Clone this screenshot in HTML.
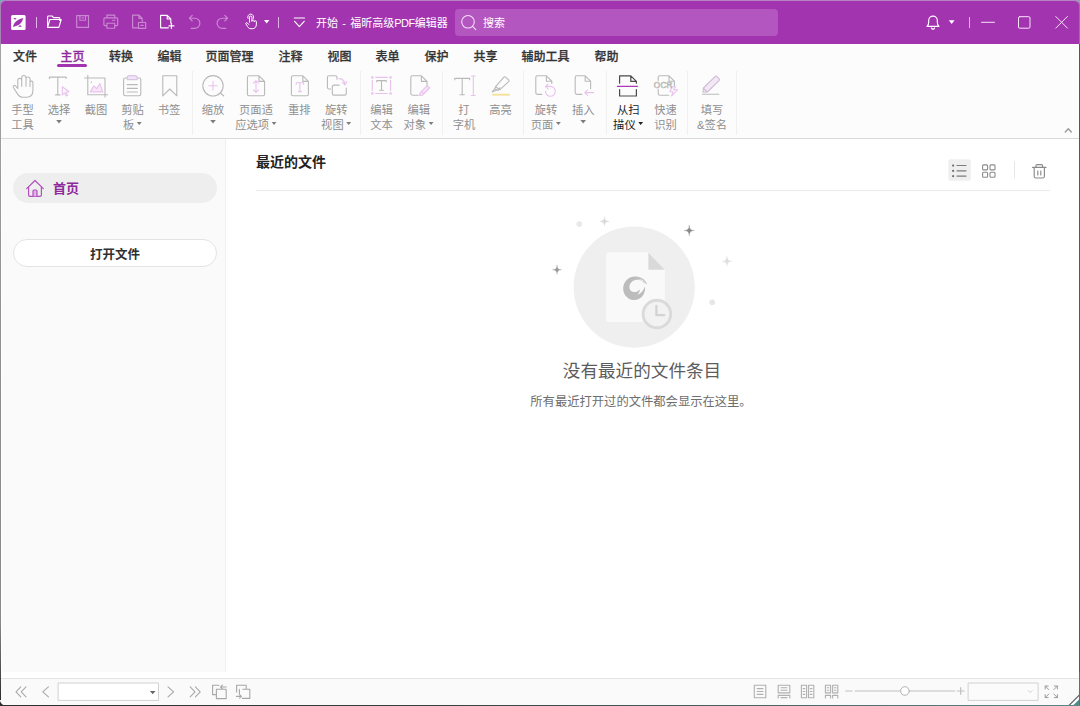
<!DOCTYPE html>
<html lang="zh-CN">
<head>
<meta charset="utf-8">
<title>开始 - 福昕高级PDF编辑器</title>
<style>
*{box-sizing:border-box;margin:0;padding:0}
html,body{width:1080px;height:706px;overflow:hidden;background:#5f8f93}
body{background:linear-gradient(180deg,#7fa9b8 0,#7fa9b8 50%,#2e2e2e 50%,#2e2e2e 100%)}
body{font-family:"Liberation Sans","Noto Sans CJK SC",sans-serif;position:relative;color:#333}
.abs{position:absolute}
#win{position:absolute;left:0;top:0;width:1080px;height:706px;background:#fff;border-radius:6px 6px 0 7px;overflow:hidden}
#title{position:absolute;left:0;top:0;width:1080px;height:44px;background:#a334b0}
#title svg{position:absolute;overflow:visible}
#title .sep{position:absolute;width:1px;background:#e2b4e7;top:17px;height:11px}
#ttext{position:absolute;left:316px;top:14.300px;font-size:11px;line-height:18px;color:#fff;white-space:nowrap;word-spacing:1.200px}
#search{position:absolute;left:455px;top:9px;width:323px;height:27px;border-radius:4px;background:#b456c0}
#search span{position:absolute;left:28px;top:5px;font-size:11px;line-height:18px;color:#fff}
#menu{position:absolute;left:0;top:44px;width:1080px;height:26px;background:#fcfcfd}
#menu span{-webkit-text-stroke:.25px currentColor;position:absolute;top:4.400px;margin-left:.4px;font-size:12px;line-height:18px;font-weight:500;color:#333;white-space:nowrap;transform:translateX(-50%)}
#menu span.on{color:#8e2a9b}
#menu i{position:absolute;left:57px;top:20px;width:30px;height:3px;border-radius:2px;background:#a334b0}
#ribbon{position:absolute;left:0;top:70px;width:1080px;height:68px;background:#fcfcfd}
.rb{position:absolute;top:0;width:40px;height:68px;transform:translateX(-50%);text-align:center;font-size:11.3px;line-height:15.7px;color:#8f8f8f;white-space:nowrap}
.rb svg{position:absolute;left:50%;top:4px;width:26px;height:26px;margin-left:-13px;overflow:visible}
.rb .t{position:absolute;left:-10px;right:-10px;top:32.6px}
.rb.en{color:#222}
.car{display:inline-block;width:5.6px;height:3.5px;background:#7c7c7c;clip-path:polygon(0 0,100% 0,50% 100%);vertical-align:4.3px;margin-left:2.2px}.car.lone{margin-left:0;vertical-align:5.8px}
.en .car{background:#222}
.gsep{position:absolute;top:1px;width:1px;height:64px;background:#f0f0f0}
#rline{position:absolute;left:0;top:138px;width:1080px;height:1px;background:#d9d9d9}
#side{position:absolute;left:2px;top:139px;width:224px;height:533px;background:#fafafa;border-right:1px solid #f0f0f0}
#home{position:absolute;left:13px;top:173.300px;width:204px;height:29.800px;border-radius:15px;background:#eeeeee}
#home span{position:absolute;left:40px;top:5.500px;font-size:13px;line-height:19px;font-weight:700;color:#8e2a9b}
#open{position:absolute;left:13px;top:239px;width:204px;height:28px;border-radius:14px;background:#fff;border:1px solid #e3e3e3;text-align:center;font-size:12.500px;line-height:26px;font-weight:700;color:#303030;padding-top:1.800px;padding-left:0}
#h1{position:absolute;left:256px;top:151.500px;font-size:14px;line-height:20px;font-weight:700;color:#222}
#hline{position:absolute;left:256px;top:190px;width:794px;height:1px;background:#ebebeb}
#e1{position:absolute;left:442px;width:400px;top:358.300px;text-align:center;font-size:17.600px;line-height:26px;color:#5c5c5c}
#e2{position:absolute;left:441px;width:400px;top:392.800px;text-align:center;font-size:12.300px;line-height:18px;color:#6e6e6e}
#status{position:absolute;left:0;top:678px;width:1080px;height:28px;background:#fafafa;border-top:1px solid #e4e4e4}
#frame{position:absolute;left:0;top:0;width:1080px;height:706px;pointer-events:none}
#frame i{position:absolute;display:block}
#tedge{position:absolute;left:0;top:0;width:1080px;height:44px;border-radius:6px 6px 0 0;border-top:1px solid #b684c2;border-left:1px solid #a583b3;border-right:1px solid #9a6fa8;pointer-events:none}
</style>
</head>
<body>
<div id="win">
<div id="title">
<div class="sep" style="left:36px"></div>
<div class="sep" style="left:278px"></div>
<div class="sep" style="left:969px"></div>
<div id="ttext">开始 - 福昕高级<span style="letter-spacing:-.5px">PDF</span>编辑器</div>
<div id="search"><span>搜索</span></div>
<svg id="tsvg" width="1080" height="44" viewBox="0 0 1080 44" style="left:0;top:0" fill="none" stroke="#fff" stroke-width="1.15" stroke-linecap="round" stroke-linejoin="round">
<!-- logo -->
<rect x="11.1" y="15" width="14.5" height="15" rx="1.5" fill="#fff" stroke="none"/>
<path d="M13 27 C13.6 22.600 17.400 19 23.500 18 C22.400 19.800 22.600 21.200 21 23 C19 25.300 16 26.200 13 27 Z M13.200 17.900 L16.800 18.200 L15 19.800 Z M21.800 26.900 L18 26.500 L20.200 25 Z" fill="#a334b0" stroke="none"/>
<!-- open folder -->
<path d="M47.6 27.4 V16.9 q0-.9 .9-.9 h3.6 l1.5 1.6 h5.3 q.9 0 .9 .9 v1.9 M47.6 27.4 l2.3-7.9 h11.3 l-2.3 7.9 Z"/>
<g opacity=".42">
<!-- save -->
<path d="M76.7 15.6 h11.8 v11.8 h-11.8 Z M79.9 15.6 v4.6 h5.6 v-4.6 M82.2 17.9 h1.2"/>
<!-- printer -->
<path d="M106.9 17.8 v-2.7 h7.8 v2.7 M106.9 25.6 h-2 q-1 0-1-1 v-5.8 q0-1 1-1 h11.8 q1 0 1 1 v5.8 q0 1-1 1 h-2 M106.9 23.2 h7.8 v5 h-7.8 Z M112.6 20.2 h2.4"/>
<!-- page with box -->
<path d="M138.2 27.8 h-5.6 v-12.6 h6.4 l3.2 3.2 v3.8 M139 15.2 v3.2 h3.2 M138.5 22.5 h7.2 v5.8 h-7.2 Z M141 25.4 h2.2"/>
<!-- undo -->
<path d="M189.4 18.2 h5.4 a5.1 5.1 0 0 1 0 10.2 h-3.6 M192.2 15.4 l-2.8 2.8 l2.8 2.8"/>
<!-- redo -->
<path d="M227.6 18.2 h-5.4 a5.1 5.1 0 0 0 0 10.2 h3.6 M224.8 15.4 l2.8 2.8 l-2.8 2.8"/>
</g>
<!-- new page -->
<path d="M168.4 27.8 h-7.8 v-12.4 h6.6 l3.6 3.6 v4 M167.2 15.4 v3.6 h3.6 M171.4 23.4 v5 M168.9 25.9 h5"/>
<!-- hand pointer -->
<path stroke-width="1" d="M249.500 22.2 v-5 a1.200 1.200 0 0 1 2.400 0 v3.800 M251.900 21 a1.150 1.150 0 0 1 2.300 .3 M254.200 21.600 a1.100 1.100 0 0 1 2.200 .5 v2 c0 3-1.600 4.600-4 4.600 h-1.400 c-1.600 0-2.600-.7-3.500-2.200 l-1.600-2.600 c-.5-.9 .7-1.700 1.400-1 l1.500 1.600 M248 18.400 a3 3 0 1 1 5.400 0"/>
<path d="M264 20 h5.400 l-2.700 3.500 Z" fill="#fff" stroke="none"/>
<!-- customize arrow -->
<path d="M294.300 18 h10.200 M294.600 21.300 l4.800 5.300 l4.800-5.300"/>
<!-- search icon -->
<g stroke-width="1.050" stroke="#f6e4f8"><circle cx="468" cy="21.800" r="6.300"/><path d="M472.600 26.400 l3.200 3.200"/></g>
<!-- bell -->
<path d="M927 26.400 c1.300-1 1.700-2.200 1.700-4.200 v-1.800 a4.300 4.300 0 0 1 8.600 0 v1.800 c0 2 .4 3.200 1.700 4.200 Z M931.400 28 a1.700 1.700 0 0 0 3.200 0"/>
<path d="M948.800 20.300 h5.800 l-2.900 3.600 Z" fill="#fff" stroke="none"/>
<!-- window buttons -->
<g stroke-width="1" stroke="#f6e4f8"><path d="M981.500 22.300 h13"/>
<rect x="1018.500" y="16.700" width="11.500" height="11.500" rx="1.200"/>
<path d="M1055.800 16.500 l11.600 11.600 M1067.400 16.500 l-11.600 11.600"/></g>
</svg>
</div>
<div id="menu">
<span style="left:24.5px">文件</span><span class="on" style="left:72px">主页</span><span style="left:120.5px">转换</span><span style="left:169px">编辑</span><span style="left:229px">页面管理</span><span style="left:290px">注释</span><span style="left:339px">视图</span><span style="left:387px">表单</span><span style="left:436px">保护</span><span style="left:485px">共享</span><span style="left:545px">辅助工具</span><span style="left:606px">帮助</span>
<i></i>
</div>
<div id="ribbon">
<svg id="rsvg" width="1080" height="68" viewBox="0 70 1080 68" style="position:absolute;left:0;top:0" fill="none" stroke="#b9b9b9" stroke-width="1.1" stroke-linecap="round" stroke-linejoin="round">
<!-- hand -->
<path d="M17.800 88.500 v-8.200 a1.950 1.950 0 0 1 3.900 0 v6 M21.700 86.300 v-8.600 a2.150 2.150 0 0 1 4.300 0 v8.600 M26 86.300 v-7.300 a2 2 0 0 1 4 0 v7.600 M30 86.600 v-4 a1.450 1.450 0 0 1 2.900 0 v7.600 c0 4.400-2.600 7-6.200 7 h-3.800 c-2.600 0-4.200-1.300-5.600-3.600 l-3.900-6.100 c-.9-1.500 .9-2.800 2.100-1.700 l2.300 2.700"/>
<!-- select T -->
<path d="M49.400 78.400 v-1.300 h16.800 v1.300 M57.800 77.100 v17.800 M55.600 94.900 h4.400"/>
<path d="M62.300 86.800 l6.700 4.900 l-3.100 .5 l1.700 3 l-1.300 .7 l-1.700-3 l-2.300 2 Z" stroke="#e8c1ec"/>
<!-- snapshot -->
<path d="M87.800 75.400 v19.300 h19.800 M84.600 78 h20.400 v18.900"/>
<path d="M90.200 91.900 l3.700-6 l2.800 2.700 l3.300-5 l2.800 8.300 Z" stroke="#e8c1ec" fill="#f6e6f8"/>
<circle cx="91.400" cy="82.300" r=".7" fill="#d9a0df" stroke="none"/>
<!-- clipboard -->
<path d="M127.300 78 h-2 q-1.700 0-1.700 1.700 v14.400 q0 1.700 1.700 1.700 h13.800 q1.700 0 1.700-1.700 v-14.400 q0-1.700-1.700-1.700 h-2"/>
<path d="M127.200 79.600 v-1.600 q0-2.400 2.400-2.400 h5.200 q2.400 0 2.400 2.400 v1.600 Z" stroke="#dcc4e4" fill="#f1e4f5"/>
<path d="M127.200 84.600 h10.200 M127.200 88.400 h10.200 M127.200 92 h10.200"/>
<!-- bookmark -->
<path d="M162.800 95.800 v-20 h14 v20 l-7-6.800 Z"/>
<!-- zoom -->
<circle cx="213" cy="85.800" r="10.200"/><path d="M220.400 93 l3.400 3"/>
<path d="M208.800 85.800 h8.400 M213 81.600 v8.400" stroke="#e8c1ec"/>
<!-- page fit -->
<path d="M247.400 77.400 q0-1.600 1.600-1.600 h10 l5.600 5.600 v12.800 q0 1.600-1.600 1.600 h-14 q-1.600 0-1.600-1.600 Z M259 75.800 v5.600 h5.600"/>
<path d="M256 80.800 v11.400 M253.400 83.200 l2.600-2.600 l2.600 2.600 M253.400 89.800 l2.600 2.600 l2.600-2.600" stroke="#e8c1ec"/>
<!-- reflow -->
<path d="M291.400 77.400 q0-1.600 1.600-1.600 h9.800 l5.600 5.600 v12.800 q0 1.600-1.600 1.600 h-13.800 q-1.600 0-1.600-1.600 Z M302.800 75.800 v5.600 h5.600"/>
<path d="M296.200 84.200 v-1.400 h7.400 v1.400 M299.900 82.800 v8.800 M298.400 91.600 h3" stroke="#e8c1ec"/>
<!-- rotate view -->
<path d="M330.600 89 h-1.600 q-1.600 0-1.600-1.600 v-10 q0-1.600 1.600-1.600 h6.400 q1.600 0 1.600 1.600 v1.800"/>
<path d="M346.300 88 v5.400 q0 1.700-1.700 1.700 h-10.600 q-1.700 0-1.700-1.700 v-6.600 q0-1.700 1.700-1.700 h5.200"/>
<path d="M339 78.600 c3.200 0 5.400 2 5.800 5.400 M342.200 82.200 l2.700 2.600 l1.900-3.200" stroke="#e8c1ec"/>
<!-- edit text -->
<path d="M375.600 77.400 h11.800 M375.600 93.500 h11.800 M372.300 80.400 v10 M390.600 80.400 v10" stroke="#e8c1ec"/>
<g fill="#e8c1ec" stroke="none"><rect x="371.200" y="76.300" width="2.300" height="2.300"/><rect x="389.400" y="76.300" width="2.300" height="2.300"/><rect x="371.200" y="92.300" width="2.300" height="2.300"/><rect x="389.400" y="92.300" width="2.300" height="2.300"/></g>
<path d="M376.800 81.800 v-1.200 h9.400 v1.200 M381.500 80.600 v9.600 M379.600 90.200 h3.800"/>
<!-- edit object -->
<path d="M418.200 95.200 h-5.800 q-1.600 0-1.600-1.600 v-16.200 q0-1.600 1.600-1.600 h9 l5.600 5.600 v4 M421.400 75.800 v5.600 h5.600"/>
<path d="M420.200 92.600 l7-7 l2.400 2.400 l-7 7 l-3 .6 Z M421.400 91.400 l2.400 2.400" stroke="#e8c1ec" fill="#f6e6f8"/>
<!-- typewriter -->
<path d="M454.800 79.800 v-1.400 h14.800 v1.400 M462.200 78.400 v16.400 M460 94.800 h4.400"/>
<path d="M471.400 76 h3.800 M471.400 95.500 h3.800 M473.300 76 v19.500" stroke="#e8c1ec"/>
<!-- highlight -->
<path d="M503.700 77.300 q.9-1 1.900-.1 l3 2.700 q.9 .9 0 1.800 l-8.700 8 l-4.300-3 Z M495.600 86.700 l-1 2.100 l-2.400 3.100 l3.600-1.500 l2.500-.5 l1.600-2.200 M494.700 88.700 l3.600 1.700"/>
<path d="M492.200 94.700 h17.600" stroke="#f3e29a" stroke-width="1.900" stroke-linecap="butt"/>
<!-- rotate page -->
<path d="M541.800 94.400 h-4.400 q-1.600 0-1.600-1.600 v-15.400 q0-1.600 1.600-1.600 h9 l5.400 5.400 v2.200 M546.400 75.800 v5.400 h5.400"/>
<path d="M545.800 86.400 h4.600 a4.900 4.900 0 1 1-4.900 4.900 M548 84.200 l-2.500 2.200 l2.500 2.400" stroke="#e8c1ec"/>
<!-- insert -->
<path d="M581.800 94.400 h-5 q-1.600 0-1.600-1.600 v-15.400 q0-1.600 1.600-1.600 h8.400 l5.400 5.400 v7.400 M585.200 75.800 v5.400 h5.400"/>
<path d="M585 92.600 h8.600 M587.600 89.900 l-2.800 2.700 l2.800 2.700" stroke="#e8c1ec"/>
<!-- scanner -->
<g stroke="#4a4a4a" stroke-width="1.200"><path d="M619.600 83.200 v-7.400 h11.200 l5.600 5.600 v1.800 M630.800 75.800 v5.600 h5.600 M619.600 89.600 v6.400 h16.800 v-6.400"/></g>
<path d="M617.400 86.400 h20" stroke="#a93bb6" stroke-width="1.200"/>
<!-- OCR -->
<path d="M658.200 80.400 v-3 q0-1.600 1.600-1.600 h9.200 l5.400 5.400 v4.800 M669 75.800 v5.400 h5.400 M658.200 89.400 v4.200 q0 1.600 1.600 1.600 h9"/>
<path d="M672 86.800 h3.600 l-2 3 h3.800 l-5.800 6 l1.200-4 h-2.800 Z" stroke="#e8c1ec"/>
<!-- fill & sign -->
<path d="M703 92.300 l.4-4.300 l11.600-11.400 q1-1 2 0 l2 2 q1 1 0 2 l-11.600 11.400 Z M703.600 88.400 l3.600 3.600" stroke="#d0bcd4" fill="#f3e8f5"/>
<path d="M702.600 94.300 h16.200"/>
<!-- collapse -->
<path d="M1065.300 132 l3-3.300 l3 3.300" stroke="#9a9a9a" stroke-width="1.400"/>
</svg>
<svg width="1080" height="68" viewBox="0 70 1080 68" style="position:absolute;left:0;top:0"><text x="663.300" y="88.300" font-family="'Liberation Sans',sans-serif" font-size="8.200" text-anchor="middle" fill="none" stroke="#b4b4b4" stroke-width=".6" letter-spacing=".3">OCR</text></svg>
<div class="rb" style="left:22.5px"><div class="t">手型<br>工具</div></div>
<div class="rb" style="left:59px"><div class="t">选择<br><b class="car lone"></b></div></div>
<div class="rb" style="left:96px"><div class="t">截图</div></div>
<div class="rb" style="left:132.5px"><div class="t">剪贴<br>板<b class="car"></b></div></div>
<div class="rb" style="left:169px"><div class="t">书签</div></div>
<div class="rb" style="left:213px"><div class="t">缩放<br><b class="car lone"></b></div></div>
<div class="rb" style="left:256px"><div class="t">页面适<br>应选项<b class="car"></b></div></div>
<div class="rb" style="left:299.3px"><div class="t">重排</div></div>
<div class="rb" style="left:336.3px"><div class="t">旋转<br>视图<b class="car"></b></div></div>
<div class="rb" style="left:381.5px"><div class="t">编辑<br>文本</div></div>
<div class="rb" style="left:418.7px"><div class="t">编辑<br>对象<b class="car"></b></div></div>
<div class="rb" style="left:464px"><div class="t">打<br>字机</div></div>
<div class="rb" style="left:500.6px"><div class="t">高亮</div></div>
<div class="rb" style="left:546px"><div class="t">旋转<br>页面<b class="car"></b></div></div>
<div class="rb" style="left:583.2px"><div class="t">插入<br><b class="car lone"></b></div></div>
<div class="rb en" style="left:628.3px"><div class="t">从扫<br>描仪<b class="car"></b></div></div>
<div class="rb" style="left:665.5px"><div class="t">快速<br>识别</div></div>
<div class="rb" style="left:712px"><div class="t">填写<br>&amp;签名</div></div>
<div class="gsep" style="left:191.5px"></div>
<div class="gsep" style="left:359.5px"></div>
<div class="gsep" style="left:442px"></div>
<div class="gsep" style="left:523.3px"></div>
<div class="gsep" style="left:605.5px"></div>
<div class="gsep" style="left:687.2px"></div>
<div class="gsep" style="left:736.3px"></div>
</div>
<div id="rline"></div>
<div id="side"></div>
<div id="home"><span>首页</span></div>
<div id="open">打开文件</div>
<div id="h1">最近的文件</div>
<div id="hline"></div>
<div id="e1">没有最近的文件条目</div>
<div id="e2">所有最近打开过的文件都会显示在这里。</div>
<svg id="csvg" width="1080" height="706" viewBox="0 0 1080 706" style="position:absolute;left:0;top:0;pointer-events:none" fill="none" stroke-linecap="round" stroke-linejoin="round">
<!-- home icon -->
<path d="M26.700 188.600 l8.300-8.100 l8.300 8.100 M28.600 187 v8 q0 1.400 1.400 1.400 h10 q1.400 0 1.400-1.400 v-8" stroke="#b04fbd" stroke-width="1.200"/>
<path d="M33 196.200 v-5.200 q0-1 1-1 h2 q1 0 1 1 v5.200" stroke="#b04fbd" stroke-width="1.200" fill="#e6b0ec"/>
<!-- view toggles -->
<rect x="948.300" y="159.300" width="22.500" height="21.500" rx="2" fill="#efefef"/>
<g stroke="#7d7d7d" stroke-width="1.200"><path d="M957 165.500 h9 M957 170.800 h9 M957 176.100 h9"/></g>
<g fill="#6a6a6a"><rect x="952.200" y="164.600" width="1.900" height="1.900"/><rect x="952.200" y="169.900" width="1.900" height="1.900"/><rect x="952.200" y="175.200" width="1.900" height="1.900"/></g>
<g stroke="#8a8a8a" stroke-width="1.100"><rect x="982.600" y="164.900" width="5" height="5" rx="1"/><rect x="990" y="164.900" width="5" height="5" rx="1"/><rect x="982.600" y="172.200" width="5" height="5" rx="1"/><rect x="990" y="172.200" width="5" height="5" rx="1"/></g>
<path d="M1014.500 161.800 v16.400" stroke="#e6e6e6" stroke-width="1"/>
<g stroke="#8a8a8a" stroke-width="1.150"><path d="M1032.600 167.400 h13.400 M1036 167.200 v-1.400 q0-1.200 1.200-1.200 h4.200 q1.200 0 1.200 1.200 v1.400 M1034.200 167.600 v8.600 q0 1.800 1.800 1.800 h6.600 q1.800 0 1.800-1.800 v-8.600 M1037.800 171 v4 M1040.800 171 v4"/></g>
<!-- empty illustration -->
<circle cx="634.200" cy="287.100" r="60.600" fill="#efefef"/>
<path d="M607.800 252.200 h40.600 l16.600 17.600 v50.600 q0 1.500-1.500 1.500 h-55.700 q-1.500 0-1.500-1.500 v-66.700 q0-1.500 1.500-1.500 Z" fill="#f9f9f9"/>
<path d="M648.400 252.600 v17.200 h16.400 Z" fill="#d9d9d9"/>
<!-- foxit-like G -->
<path d="M644.600 281.600 c-3.400-6-12.800-7-18 -1.600 c-5.400 5.600-4.200 14.600 2 18.400 c5 3 11.400 1.600 14.600-3.400 c1.800-2.800 2.200-6 1.600-8.400 c-1.200 4.400-4.200 7.600-7.800 8.200 c1.800-1.600 2.800-3.400 3-5.400 c-1.800 1.800-4 2.800-6.200 2.600 c-3.200-.4-5-3.400-4.200-6.600 c1-4 5.400-6.600 9.800-5.400 c2.200 .6 4 1.800 5.200 3.400 Z" fill="#bcbcbc"/>
<path d="M634.500 286.200 c2.200-2.600 5.400-3.800 8.800-3 c-2.600 .6-4.600 2.200-5.600 4.600 c-.8-1-1.800-1.600-3.200-1.600 Z" fill="#f9f9f9"/>
<path d="M636.400 280.600 q4.400 -1.800 8.400 .4 M637.600 283.200 q3.600 -1.400 7 .4" stroke="#f9f9f9" stroke-width=".9"/>
<!-- clock -->
<path d="M637.400 277.300 q6.200 .8 9 6.400" stroke="#c6c6c6" stroke-width="1.100"/>
<circle cx="656.900" cy="314" r="13.800" fill="#f2f2f2" stroke="#dadada" stroke-width="2.900"/>
<path d="M656.400 306 v9.200 h7.800" stroke="#d3d3d3" stroke-width="2.300"/>
<!-- sparkles -->
<path d="M689.2 225.3 Q689.2 230.5 694.4 230.5 Q689.2 230.5 689.2 235.7 Q689.2 230.5 684.0 230.5 Q689.2 230.5 689.2 225.3 Z" fill="#8a8a8a" stroke="#8a8a8a" stroke-width=".3"/>
<path d="M557.0 265.2 Q557.0 269.8 561.6 269.8 Q557.0 269.8 557.0 274.4 Q557.0 269.8 552.4 269.8 Q557.0 269.8 557.0 265.2 Z" fill="#9a9a9a" stroke="#9a9a9a" stroke-width=".3"/>
<path d="M604.4 216.6 Q604.4 221.4 609.2 221.4 Q604.4 221.4 604.4 226.2 Q604.4 221.4 599.6 221.4 Q604.4 221.4 604.4 216.6 Z" fill="#dadada" stroke="#dadada" stroke-width=".3"/>
<path d="M727.0 256.3 Q727.0 261.3 732.0 261.3 Q727.0 261.3 727.0 266.3 Q727.0 261.3 722.0 261.3 Q727.0 261.3 727.0 256.3 Z" fill="#dedede" stroke="#dedede" stroke-width=".3"/>
<circle cx="579.300" cy="224.100" r="2.900" fill="#e9e9e9"/>
<circle cx="712.200" cy="302.300" r="2.800" fill="#e6e6e6"/>
</svg>
<div id="status">
<svg id="ssvg" width="1080" height="28" viewBox="0 678 1080 28" style="position:absolute;left:0;top:-1px" fill="none" stroke="#a8a8a8" stroke-width="1.100" stroke-linecap="round" stroke-linejoin="round">
<path d="M20.800 686.800 l-4.800 5 l4.800 5 M26 686.800 l-4.800 5 l4.800 5 M48.400 686.800 l-5.600 5 l5.600 5"/>
<rect x="58.500" y="683" width="100" height="17.400" fill="#fff" stroke="#d2d2d2" stroke-width="1"/>
<path d="M149.900 691.100 h5.600 l-2.800 3.200 Z" fill="#666" stroke="none"/>
<path d="M168 686.800 l5.600 5 l-5.600 5 M190.200 686.800 l4.800 5 l-4.800 5 M195.400 686.800 l4.800 5 l-4.800 5"/>
<!-- go to previous view -->
<path d="M216.400 694.600 h-3.800 v-9.400 h6.400 M216.400 689.200 h9.800 v9.400 h-9.800 Z M226.200 687 h-5.600 M222.400 685.200 l-1.800 1.800 l1.800 1.800"/>
<!-- go to next view -->
<path d="M236.600 692 v-6.800 h9.600 v3.800 M242.800 689.200 h7 v9.200 h-7.400 M239.400 689.200 v4.600 M236.400 696.400 h5 M239.600 694.600 l1.800 1.800 l-1.800 1.800"/>
<!-- page layout icons -->
<g stroke="#b0b0b0">
<rect x="754.300" y="685.300" width="11.500" height="12.500"/><path d="M757.200 688.600 h5.800 M757.200 691.500 h5.800 M757.200 694.400 h5.800"/>
<path d="M778.200 685.300 h11.600 v7.600 h-11.600 Z M781 687.800 h6 M781 690.300 h6 M778.200 698 v-2.600 h11.600 v2.600 M781 697.600 h6"/>
<path d="M801.400 685.300 h5.200 v12.500 h-5.200 Z M808.600 685.300 h5.200 v12.500 h-5.200 Z M803.200 688.600 h1.600 M803.200 691.500 h1.600 M803.200 694.400 h1.600 M810.400 688.600 h1.600 M810.400 691.500 h1.600 M810.400 694.400 h1.600"/>
<path d="M825.400 685.300 h5.200 v7.600 h-5.200 Z M832.600 685.300 h5.200 v7.600 h-5.200 Z M827.200 687.800 h1.600 M827.200 690.300 h1.600 M834.400 687.800 h1.600 M834.400 690.300 h1.600 M825.400 698 v-2.600 h5.200 v2.600 M832.600 698 v-2.600 h5.200 v2.600"/>
</g>
<!-- zoom slider -->
<path d="M845.800 691 h6.200 M855.200 691 h99.600 M957.400 691 h6.600 M960.700 687.700 v6.600" stroke="#c0c0c0" stroke-width="1.200"/>
<circle cx="904.900" cy="691" r="4.300" fill="#fff" stroke="#b4b4b4" stroke-width="1"/>
<rect x="968.500" y="683" width="69.600" height="17.400" fill="#fbfbfb" stroke="#d2d2d2" stroke-width="1"/>
<path d="M1028.200 690.600 l2 2 l2-2" stroke="#d0d0d0" stroke-width="1"/>
<!-- fullscreen -->
<path d="M1045.200 686 l3.600 3.600 M1045.200 689 v-3 h3 M1057.400 686 l-3.600 3.600 M1054.400 686 h3 v3 M1045.200 697.600 l3.600-3.600 M1045.200 694.600 v3 h3 M1057.400 697.600 l-3.600-3.600 M1054.400 697.600 h3 v-3" stroke="#9c9c9c" stroke-width="1"/>
<!-- resize grip -->
<path d="M1072.500 706 L1080 698.500 V706 Z" fill="#4f8c8c" stroke="none"/><path d="M1068.500 706 l11.500-11.500" stroke="#5a5a5a" stroke-width="1.100"/><path d="M1070.800 706 l9.200-9.200" stroke="#fff" stroke-width="1.300"/>
</svg>
</div>
</div>
<div id="frame"><i style="left:0;top:44px;width:1px;height:656px;background:linear-gradient(180deg,#a4a4a4 0,#8c8c8c 55%,#8a8a8a 88%,#2c2c2c 100%)"></i><i style="left:1079px;top:44px;width:1px;height:628px;background:#585858"></i><i style="left:1079px;top:672px;width:1px;height:34px;background:#3f7f80"></i><i style="left:0;top:705px;width:1080px;height:1px;background:linear-gradient(90deg,#2e2e2e 0,#3a3f3f 40%,#5c8888 100%)"></i></div>
<div id="tedge"></div>
</body>
</html>
